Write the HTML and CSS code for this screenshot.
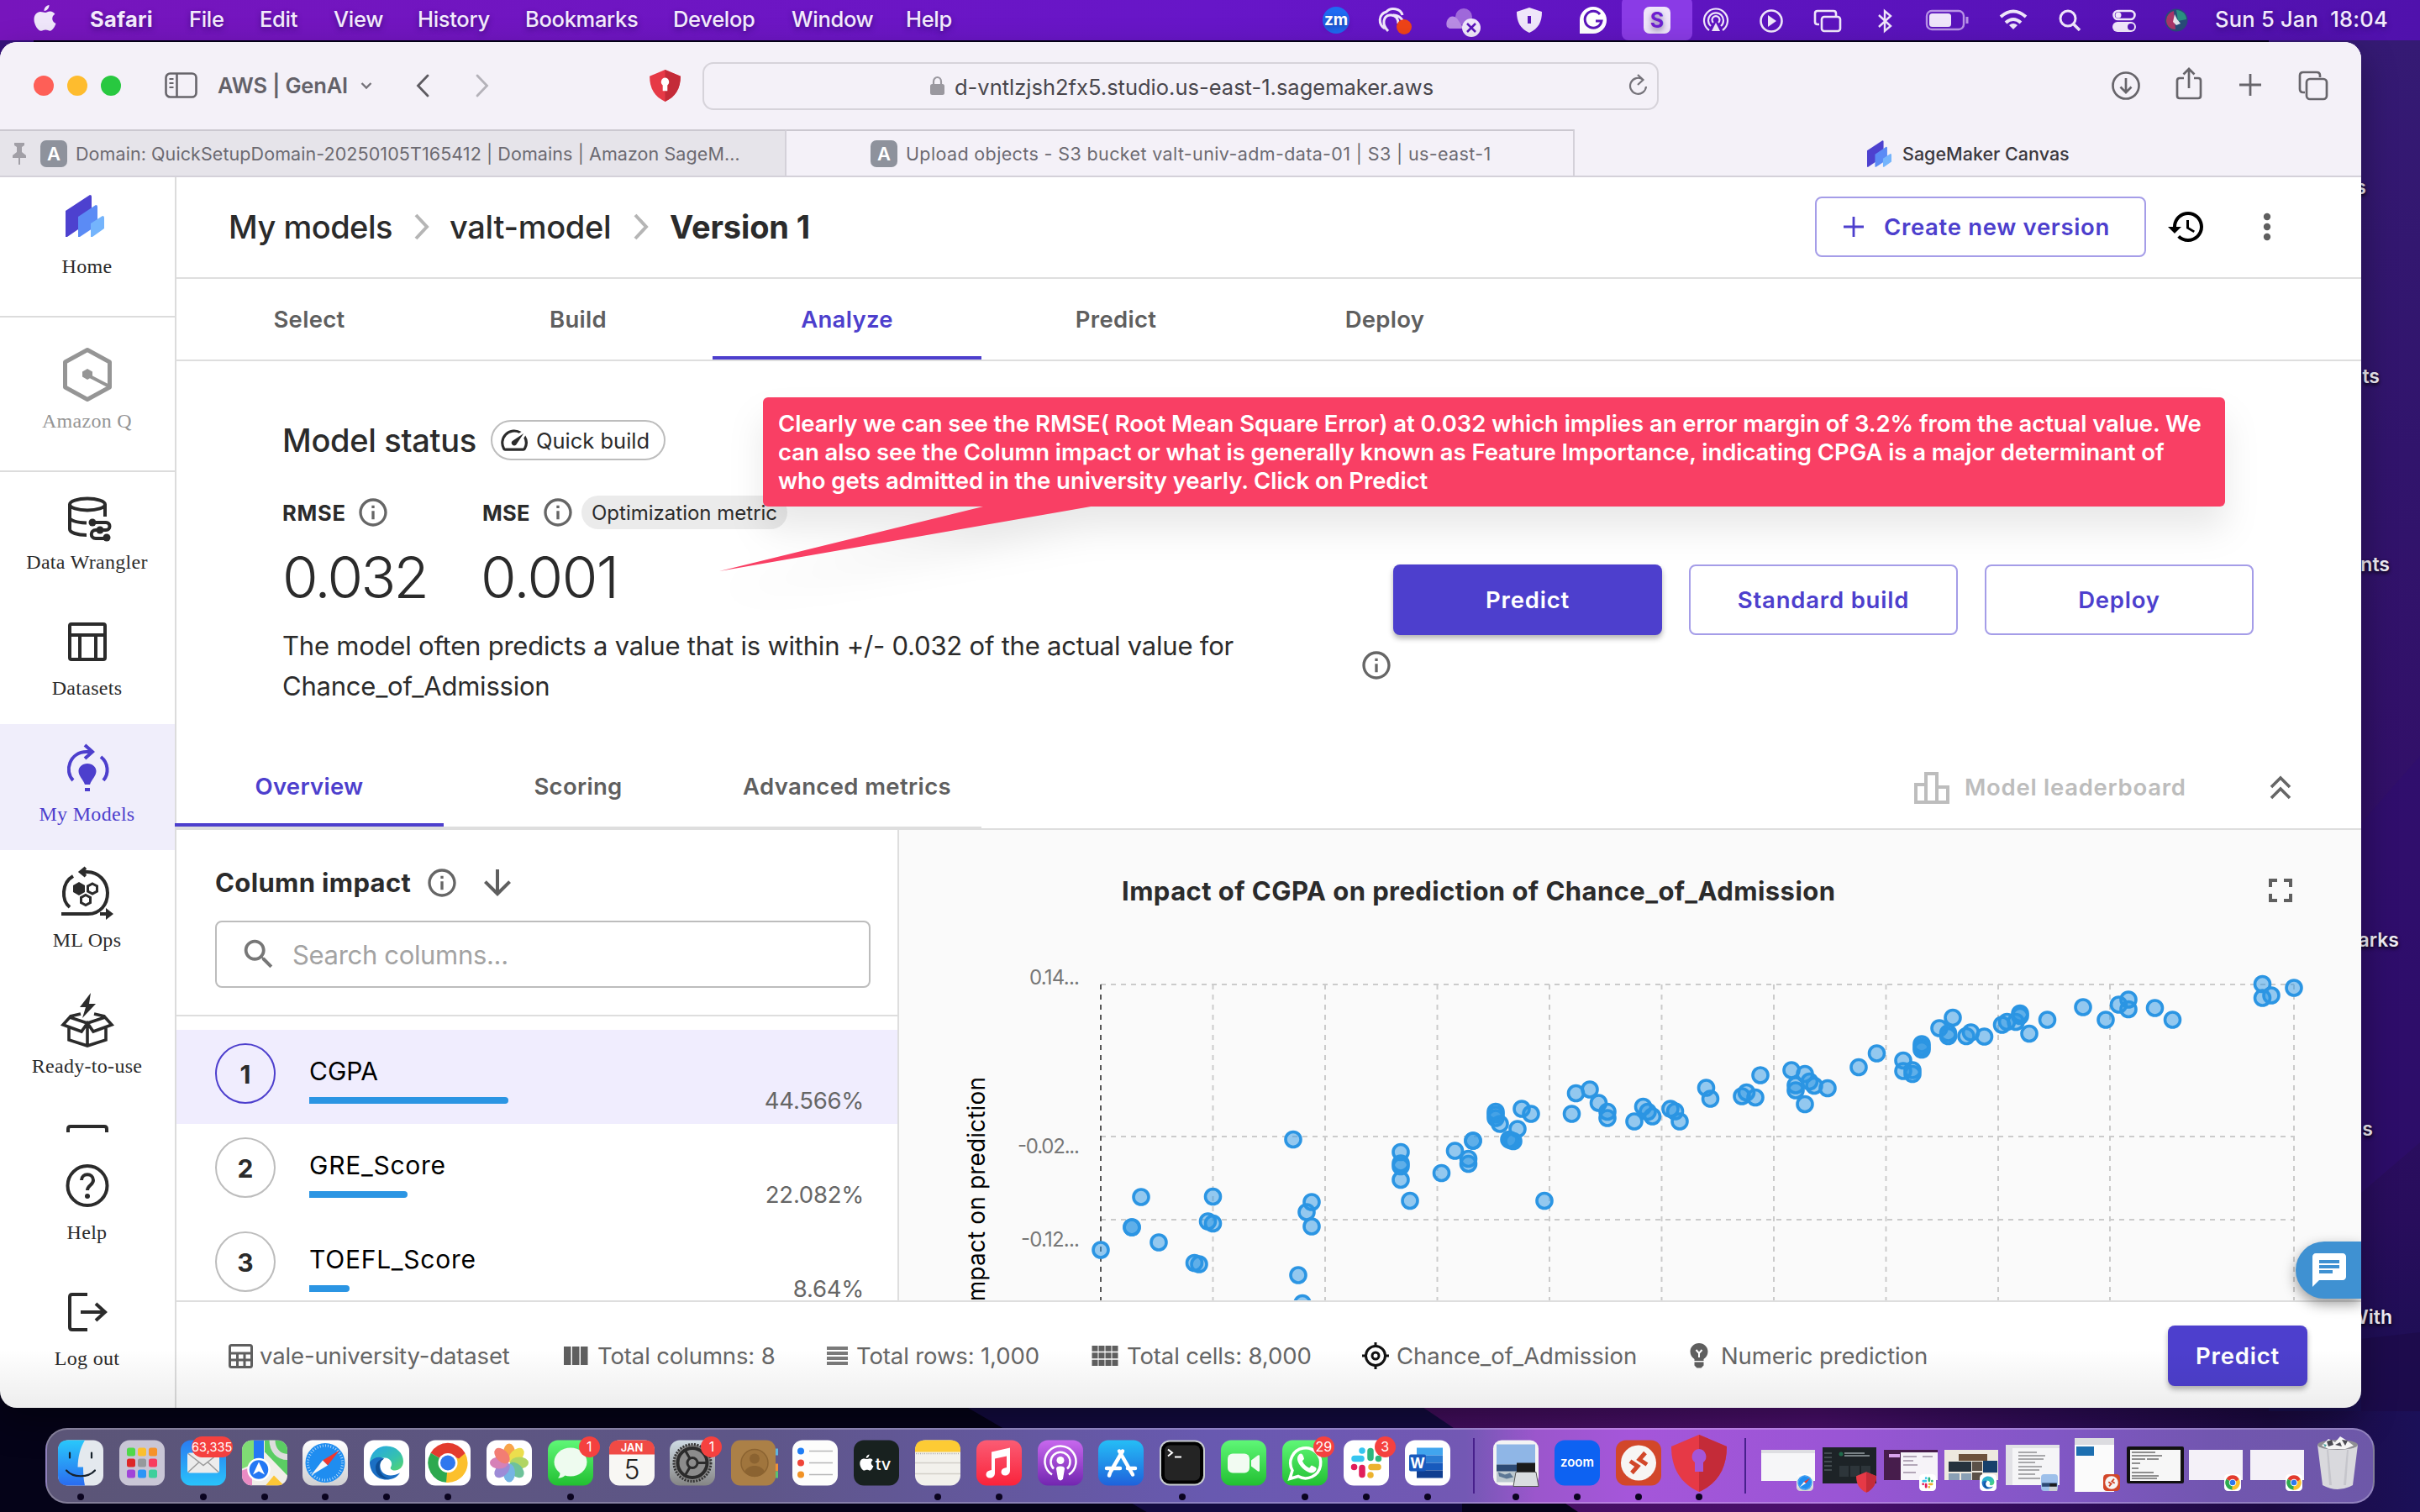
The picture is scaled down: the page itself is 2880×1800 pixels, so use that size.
FILE: index.html
```html
<!DOCTYPE html>
<html lang="en">
<head>
<meta charset="utf-8">
<title>SageMaker Canvas</title>
<link rel="stylesheet" href="styles.css">
</head>
<body>
<svg class="defs" width="0" height="0">
  <defs>
    <linearGradient id="gBlue" x1="0" y1="0" x2="0" y2="1"><stop offset="0" stop-color="#2a7cf0"/><stop offset="1" stop-color="#29c3fb"/></linearGradient>
    <linearGradient id="gFinder" x1="0" y1="0" x2="0" y2="1"><stop offset="0" stop-color="#29c8fb"/><stop offset="1" stop-color="#2a6cf0"/></linearGradient>
    <linearGradient id="gGreen" x1="0" y1="0" x2="0" y2="1"><stop offset="0" stop-color="#5ff777"/><stop offset="1" stop-color="#22c032"/></linearGradient>
    <linearGradient id="gRed" x1="0" y1="0" x2="0" y2="1"><stop offset="0" stop-color="#fb5c74"/><stop offset="1" stop-color="#fa233b"/></linearGradient>
    <linearGradient id="gPod" x1="0" y1="0" x2="0" y2="1"><stop offset="0" stop-color="#c868ee"/><stop offset="1" stop-color="#7226b0"/></linearGradient>
    <linearGradient id="gStore" x1="0" y1="0" x2="0" y2="1"><stop offset="0" stop-color="#25bef6"/><stop offset="1" stop-color="#1f62dc"/></linearGradient>
    <linearGradient id="gGrey" x1="0" y1="0" x2="0" y2="1"><stop offset="0" stop-color="#ffffff"/><stop offset="1" stop-color="#d0d0d2"/></linearGradient>
    <linearGradient id="gSet" x1="0" y1="0" x2="0" y2="1"><stop offset="0" stop-color="#cfdbe4"/><stop offset="1" stop-color="#858585"/></linearGradient>
    <linearGradient id="gEdge" x1="0" y1="0" x2="1" y2="1"><stop offset="0" stop-color="#25a5e8"/><stop offset=".6" stop-color="#35c1b0"/><stop offset="1" stop-color="#58d66a"/></linearGradient>
    <symbol id="info" viewBox="0 0 24 24"><path fill="currentColor" d="M11 7h2v2h-2zm0 4h2v6h-2zm1-9C6.48 2 2 6.48 2 12s4.48 10 10 10 10-4.48 10-10S17.52 2 12 2zm0 18c-4.41 0-8-3.59-8-8s3.59-8 8-8 8 3.59 8 8-3.59 8-8 8z"/></symbol>
    <symbol id="canvas" viewBox="0 0 46 50"><path fill="#4d41cf" d="M0 19 29 0q2 0 2 2v28L2 50H0z"/><path fill="#5b8bf5" d="M15 26 36 12q2 0 2 2v22L17 50h-2z"/><path fill="#74b4fc" d="M30 34 44 25q2 0 2 2v13L32 50h-2z"/></symbol>
    <symbol id="safari" viewBox="0 0 54 54"><rect width="54" height="54" rx="12" fill="url(#gGrey)"/><circle cx="27" cy="27" r="23.500" fill="#1f8df0"/><circle cx="27" cy="27" r="20.500" fill="none" stroke="#cfe6fb" stroke-width="3" stroke-dasharray=".8 2.400"/><path d="m44 12-20 12 6 6z" fill="#f0372f"/><path d="M10 42l14-18 6 6z" fill="#f6f6f6"/></symbol>
    <symbol id="edge" viewBox="0 0 54 54"><rect width="54" height="54" rx="12" fill="#fff"/><path fill="url(#gEdge)" d="M7 26C8 14 17 7 27 7c12 0 20 9 20 18 0 7-5 11-10 11-4 0-6-2-5-4 3-4 0-11-7-11-8 0-13 4-18 5z"/><path fill="#1b6fc4" d="M7 26c5-6 12-7 17-4-6 3-6 12-1 17 5 4 12 4 20 0-4 6-10 8-16 8C15 47 7 38 7 26z"/><path fill="#0e4f96" d="M24 22c-8 4-8 20 6 24-9 1-16-5-16-13 0-6 4-10 10-11z"/></symbol>
    <symbol id="chrome" viewBox="0 0 54 54"><rect width="54" height="54" rx="12" fill="#fff"/><path fill="#e33b2e" d="M27 27 6.500 15.200A23.500 23.500 0 0 1 47.400 15.200z"/><path fill="#2da94f" d="M27 27 27 50.500A23.500 23.500 0 0 1 6.600 15.200z"/><path fill="#fcc02c" d="M27 27 47.400 15.200A23.500 23.500 0 0 1 25 50.400z"/><path fill="#e33b2e" d="M27 15.500H47.500L40 22z"/><path fill="#2da94f" d="M7 16 17 33l9 4-8 3z"/><path fill="#fcc02c" d="M37 32 26 50l4-14z"/><circle cx="27" cy="27" r="11.500" fill="#fff"/><circle cx="27" cy="27" r="9" fill="#2f78ee"/></symbol>
    <symbol id="slack" viewBox="0 0 54 54"><rect width="54" height="54" rx="12" fill="#fff"/><g stroke-width="7.500" stroke-linecap="round"><path stroke="#36c5f0" d="M13 22h8M22 12.500v.1"/><path stroke="#2eb67d" d="M32 13v8M41.500 22h-.1"/><path stroke="#ecb22e" d="M33 32h8M32 41.500v-.1"/><path stroke="#e01e5a" d="M22 33v8M12.500 32h.1"/></g></symbol>
    <symbol id="shield" viewBox="0 0 66 68"><path fill="#e63946" d="M33 0 66 14c0 26-11 44-33 54C11 58 0 40 0 14z"/><path fill="#c42b38" d="M33 0 66 14c0 26-11 44-33 54z"/></symbol>
    <symbol id="anydesk" viewBox="0 0 54 54"><rect width="54" height="54" rx="12" fill="#d2472a"/><circle cx="27" cy="27" r="21" fill="#f7f5f4"/><path d="m17 25 9 6-7 8M37 29l-9-6 7-8" fill="none" stroke="#d2472a" stroke-width="5"/></symbol>
  </defs>
</svg>

<svg class="wallpaper" viewBox="0 0 2880 1800" aria-hidden="true">
  <defs>
    <linearGradient id="strip" x1="0" y1="0" x2="0" y2="1"><stop offset="0" stop-color="#351a74"/><stop offset=".3" stop-color="#31146c"/><stop offset=".6" stop-color="#320f68"/><stop offset=".86" stop-color="#280d5c"/><stop offset="1" stop-color="#1a0f52"/></linearGradient>
    <linearGradient id="pur" x1="0" y1="0" x2="1" y2="0"><stop offset="0" stop-color="#430e5e"/><stop offset=".4" stop-color="#4a0f6c"/><stop offset=".65" stop-color="#2e0c58"/><stop offset=".85" stop-color="#1c0a42"/><stop offset="1" stop-color="#1b1058"/></linearGradient>
  </defs>
  <rect width="2880" height="1800" fill="#050318"/>
  <path fill="#130b40" d="M1140 1669h600v140h-360z"/>
  <path fill="url(#pur)" d="M1684 1669h1196v131h-1002z"/>
  <path fill="url(#strip)" d="M2700 48h180v1632h-180z"/>
  <path fill="#2e0d70" opacity=".6" d="M2880 900v460l-70 60v-440z"/>
  <path fill="#1c0a48" opacity=".7" d="M2810 1594l70-8v94h-70z"/>
  <path fill="#36127c" d="M0 48h40v60H0z"/>
</svg>

<header class="menubar">
  <nav class="menus">
    <svg width="27" height="32" viewBox="0 0 27 32"><path fill="#efe6fa" d="M18.500 0c.3 3.500-2.600 7-6 7C12.200 3.600 15.300.4 18.500 0zM14 9c1.500 0 3-1.500 5.700-1.500 2.400 0 4.500 1.300 5.700 3.200-4.600 2.700-4 9.300 1.100 11.300-1 3.200-4 8.700-7 8.700-2 0-2.800-1.200-5.200-1.200-2.500 0-3.400 1.200-5.300 1.200C5 30.700.5 23 .5 17.200.5 11.500 4.200 8 8 8c2.500 0 4.500 1 6 1z"/></svg>
    <b>Safari</b><span>File</span><span>Edit</span><span>View</span><span>History</span><span>Bookmarks</span><span>Develop</span><span>Window</span><span>Help</span>
  </nav>
  <svg class="status" width="1086" height="48" viewBox="1550 0 1086 48" fill="none" stroke="#efe6fa" stroke-width="3">
    <circle cx="1590" cy="24" r="16" fill="#1f6bf2" stroke="none"/><text class="zm" x="1590" y="30">zm</text>
    <path d="M1648 34c-8-5-8-17 2-20 5-6 17-4 19 4M1652 37c-8-8-6-18 2-19s10 6 10 10M1658 18c8 0 12 6 12 10"/><circle cx="1671" cy="32" r="9" fill="#ee4318" stroke="none"/>
    <g stroke="none" fill="#b98ce4"><path d="M1722 32c-3-8 5-17 12-10l8 12h-17z"/><circle cx="1742" cy="20" r="10" opacity=".7"/><circle cx="1751" cy="33" r="11" fill="#efe6fa"/></g><path stroke="#5b16bb" stroke-width="2.500" d="m1746 28 10 10m0-10-10 10"/>
    <path fill="#efe6fa" stroke="none" d="m1820 9 15 5c0 12-4 20-15 25-11-5-15-13-15-25z"/><path stroke="#5b16bb" stroke-width="4" d="M1820 19v9"/>
    <path fill="#fff" stroke="none" d="M1880 24a16 16 0 1 1 16 16h-16z"/><path stroke="#5b16bb" d="M1904 17a10 10 0 1 0 2 8h-7"/>
    <rect x="1930" y="-4" width="84" height="52" rx="8" fill="#8a3be6" stroke="none"/><rect x="1956" y="8" width="32" height="32" rx="7" fill="#efe6fa" stroke="none"/><text class="snag" x="1972" y="33">S</text>
    <g stroke-width="2.200"><path d="M2034 36a14 14 0 1 1 16 0M2036 31a9 9 0 1 1 12 0M2039 27a4.500 4.500 0 1 1 6 0"/></g><path fill="#efe6fa" stroke="none" d="M2042 27l5 10h-10z"/>
    <circle cx="2108" cy="25" r="12.500" stroke-width="2.600"/><path fill="#efe6fa" stroke="none" d="m2104 18 10 7-10 7z"/>
    <path stroke-width="2.600" d="M2165 29h-2q-3 0-3-3V16q0-3 3-3h19q3 0 3 3v3"/><rect x="2168" y="20" width="22" height="17" rx="3" stroke-width="2.600"/>
    <path stroke-width="2.400" d="m2236 18 14 13-7 6V13l7 6-14 13"/>
    <rect x="2293" y="13" width="44" height="22" rx="6" stroke="#b892e6" stroke-width="2.400"/><rect x="2296" y="16" width="26" height="16" rx="3.500" fill="#efe6fa" stroke="none"/><path stroke="#b892e6" d="M2341 20v8"/>
    <g stroke-width="4"><path d="M2381 20q15-13 30 0"/><path d="M2387 27q9-8 18 0"/></g><path fill="#efe6fa" stroke="none" d="m2396 35-5-5q5-4 10 0z"/>
    <circle cx="2461" cy="22" r="9"/><path stroke-width="3.500" d="m2468 29 7 7"/>
    <rect x="2515.500" y="13" width="25" height="10" rx="5" stroke-width="2.600"/><circle cx="2521" cy="18" r="3.500" fill="#efe6fa" stroke="none"/><rect x="2514" y="26" width="28" height="12" rx="6" fill="#efe6fa" stroke="none"/><circle cx="2536" cy="32" r="4" fill="#5514b6" stroke="none"/>
    <circle cx="2590" cy="24" r="13.500" fill="#294b78" stroke="none"/><path fill="#a93568" stroke="none" d="M2578 24a12 12 0 0 1 9-11l2 22c-7 0-11-5-11-11z"/><path fill="#2a8f80" stroke="none" d="M2590 12c7 0 12 5 12 11l-10 2z"/><path fill="#fff" stroke="none" opacity=".85" d="m2588 17 3 6 4 5-5 2-4-4z"/>
  </svg>
  <span class="clock">Sun 5 Jan&nbsp; 18:04</span>
</header>

<div class="desk-label" style="top:209px;right:64px">s</div>
<div class="desk-label" style="top:434px;right:48px">ts</div>
<div class="desk-label" style="top:658px;right:36px">nts</div>
<div class="desk-label" style="top:1105px;right:25px">arks</div>
<div class="desk-label" style="top:1330px;right:56px">s</div>
<div class="desk-label" style="top:1554px;right:33px">With</div>

<section class="window">
  <div class="toolbar">
    <div class="lights"><i class="red"></i><i class="amber"></i><i class="green"></i></div>
    <svg class="ic-side" width="40" height="32" viewBox="0 0 40 32" fill="none" stroke="#67656b" stroke-width="2.600"><rect x="1.500" y="1.500" width="36" height="28" rx="5"/><path d="M14.500 2v28"/><path stroke-width="2" d="M5.500 8h5M5.500 13h5M5.500 18h5"/></svg>
    <span class="group">AWS | GenAI</span>
    <svg class="ic-chev" width="14" height="10" viewBox="0 0 14 10" fill="none" stroke="#75737a" stroke-width="2.400"><path d="m1.500 2 5.500 5.500L12.500 2"/></svg>
    <svg class="ic-back" width="16" height="28" viewBox="0 0 16 28" fill="none" stroke="#5d5b61" stroke-width="2.800" stroke-linecap="round"><path d="M14 2 2.500 14 14 26"/></svg>
    <svg class="ic-fwd" width="16" height="28" viewBox="0 0 16 28" fill="none" stroke="#b4b2b9" stroke-width="2.800" stroke-linecap="round"><path d="M2 2l11.500 12L2 26"/></svg>
    <svg class="ic-shield" width="37" height="38" viewBox="0 0 66 68"><use href="#shield"/><path fill="#fff" d="M33 17a9 9 0 0 1 5 16v12H28V33a9 9 0 0 1 5-16z"/></svg>
    <div class="url">
      <svg width="17" height="24" viewBox="0 0 17 24"><rect y="10" width="17" height="13" rx="2.500" fill="#9a989f"/><path d="M4 11V7a4.500 5 0 0 1 9 0v4" fill="none" stroke="#9a989f" stroke-width="2.200"/></svg>
      <span>d-vntlzjsh2fx5.studio.us-east-1.sagemaker.aws</span>
      <svg class="reload" width="24" height="28" viewBox="0 0 24 28" fill="none" stroke="#75737a" stroke-width="2.200"><path d="M17 6.500A9.500 9.500 0 1 0 21 15M11 1l6.500 6-6.500 6"/></svg>
    </div>
    <svg class="ic-dl" width="36" height="36" viewBox="0 0 36 36" fill="none" stroke="#67656b" stroke-width="2.700"><circle cx="18" cy="18" r="15.500"/><path d="M18 9v17M11.500 19.500 18 26l6.500-6.500"/></svg>
    <svg class="ic-share" width="32" height="40" viewBox="0 0 32 40" fill="none" stroke="#67656b" stroke-width="2.700"><path d="M10 13H5q-3 0-3 3v18q0 3 3 3h22q3 0 3-3V16q0-3-3-3h-5M16 25V2M9.500 8.500 16 2l6.500 6.500"/></svg>
    <svg class="ic-plus" width="28" height="28" viewBox="0 0 28 28" stroke="#67656b" stroke-width="2.800"><path d="M14 1v26M1 14h26"/></svg>
    <svg class="ic-tabs" width="36" height="36" viewBox="0 0 36 36" fill="none" stroke="#67656b" stroke-width="2.700"><path d="M8 26H6q-4 0-4-4V6q0-4 4-4h16q4 0 4 4v2"/><rect x="10" y="10" width="24" height="24" rx="4"/></svg>
  </div>
  <div class="tabbar">
    <div class="btab first">
      <svg class="pin" width="18" height="26" viewBox="0 0 18 26" fill="#a19fa6"><path d="M3 0h12v3l-3 2v6l5 4v3H1v-3l5-4V5L3 3zM8 18h2v8H8z"/></svg>
      <i class="fav">A</i><span>Domain: QuickSetupDomain-20250105T165412 | Domains | Amazon SageM…</span>
    </div>
    <div class="btab second"><i class="fav">A</i><span>Upload objects - S3 bucket valt-univ-adm-data-01 | S3 | us-east-1</span></div>
    <div class="btab active"><svg width="29" height="32"><use href="#canvas"/></svg><span>SageMaker Canvas</span></div>
  </div>

  <div class="app">
    <aside class="sidebar">
      <div class="nav home"><svg width="46" height="50"><use href="#canvas"/></svg><span>Home</span></div>
      <div class="nav amazonq"><svg width="64" height="64" viewBox="0 0 64 64" fill="none" stroke="#959595" stroke-width="5"><path stroke-linejoin="round" d="M32 2.500 58.500 17v30L32 61.500 5.500 47V17z"/><path stroke-width="4" d="m33 33 25 13"/><path fill="#959595" stroke="none" d="m32 25 6 3.500v6L32 38l-6-3.500v-6z"/></svg><span>Amazon Q</span></div>
      <div class="navscroll">
        <div class="nav"><svg viewBox="0 0 64 64"><ellipse cx="32" cy="14.500" rx="21" ry="7"/><path d="M11 14v30c0 4 9 7 20 7M53 14v15M11 30c0 4 9 6 20 6.500"/><path d="M39 36h15c6 0 6 9 0 9H42c-7 0-7 10 0 10h12"/><g class="f"><circle cx="38" cy="36" r="4.500"/><circle cx="47" cy="45" r="4.500"/><circle cx="55" cy="54" r="4.500"/></g></svg><span>Data Wrangler</span></div>
        <div class="nav"><svg viewBox="0 0 64 64"><rect x="11" y="7" width="42" height="42" rx="2"/><path d="M11 20h42M23 20v28M42 20v28"/></svg><span>Datasets</span></div>
        <div class="nav current"><svg viewBox="0 0 64 64"><path d="M15 43C4 32 11 9 31 9h6M29 1l9 8-9 8M48 15c9 7 10 20 3 28"/><path class="f" d="M32 23c6 0 10.500 4 10.500 9 0 6-5 9-7.500 16h-6c-2.500-7-7.500-10-7.500-16 0-5 4.500-9 10.500-9zM29 52h6v4h-6z"/></svg><span>My Models</span></div>
        <div class="nav"><svg viewBox="0 0 64 64"><path d="M1 52h32c14 0 23-11 23-25S45 2 32 2h-6M30-3l-6 5 6 5M15 7C1 15 1 36 11 44M47 52h10"/><path class="f" d="m54 45 9 7-9 7zM22 14l7 4v8l-7 4-7-4v-8z"/><path stroke-width="3" d="m38 16 5.500 3v6L38 28l-5.500-3v-6zM30 29.500l5.500 3v6l-5.500 3-5.500-3v-6z"/></svg><span>ML Ops</span></div>
        <div class="nav"><svg viewBox="0 0 64 64"><path stroke-width="3.600" d="M10 36v16l22 7 22-7V36M32 32v27M32 32l-7 10-22-8 8-9 21 7 21-7 8 9-22 8zM11 24l13-3M53 24l-13-3"/><path class="f" d="M36-4 23 13h7l-4 13 16-17h-8z"/></svg><span>Ready-to-use</span></div>
        <div class="nav"><svg viewBox="0 0 64 64"><path d="M9 40V8q0-3 3-3h40q3 0 3 3v32"/></svg></div>
      </div>
      <div class="nav help"><svg viewBox="0 0 64 64"><circle cx="32" cy="27.500" r="23.500"/><path d="M25 21c0-9 14-9 14 0 0 6-7 6-7 12"/><circle class="f" cx="32" cy="40" r="3"/></svg><span>Help</span></div>
      <div class="nav"><svg viewBox="0 0 64 64"><path d="M32 7H14q-3 0-3 3v36q0 3 3 3h18M24 28h29M42 18l11 10-11 10"/></svg><span>Log out</span></div>
    </aside>

    <main class="main">
      <div class="crumbs">
        <span class="c1">My models</span><svg width="20" height="32" viewBox="0 0 20 32"><path d="m3 2 13 14L3 30" fill="none" stroke="#b5b5b5" stroke-width="4"/></svg><span class="c2">valt-model</span><svg width="20" height="32" viewBox="0 0 20 32"><path d="m3 2 13 14L3 30" fill="none" stroke="#b5b5b5" stroke-width="4"/></svg><b>Version 1</b>
        <button class="btn create"><svg width="26" height="26" viewBox="0 0 26 26" stroke="#4d3fcd" stroke-width="2.800"><path d="M13 1v24M1 13h24"/></svg>Create new version</button>
        <svg class="hist" width="48" height="48" viewBox="0 0 24 24"><path d="M13 3c-4.970 0-9 4.030-9 9H1l3.890 3.890.07.14L9 12H6c0-3.870 3.130-7 7-7s7 3.130 7 7-3.130 7-7 7c-1.930 0-3.680-.79-4.940-2.060l-1.420 1.420C8.270 19.990 10.510 21 13 21c4.970 0 9-4.030 9-9s-4.030-9-9-9zm-1 5v5l4.280 2.540.72-1.210-3.500-2.080V8H12z"/></svg>
        <svg class="dots" width="10" height="34" viewBox="0 0 10 34" fill="#5f5f5f"><circle cx="5" cy="5" r="4.200"/><circle cx="5" cy="17" r="4.200"/><circle cx="5" cy="29" r="4.200"/></svg>
      </div>
      <div class="steps"><span>Select</span><span>Build</span><span class="on">Analyze</span><span>Predict</span><span>Deploy</span></div>

      <div class="statuspane">
        <div class="left">
          <div class="title"><h1>Model status</h1><div class="chip"><svg width="38" height="38" viewBox="0 0 24 24"><path fill="#2b2b2b" d="M20.380 8.570l-1.230 1.850a8 8 0 0 1-.22 7.580H5.070A8 8 0 0 1 15.580 6.850l1.850-1.230A10 10 0 0 0 3.350 19a2 2 0 0 0 1.720 1h13.850a2 2 0 0 0 1.740-1 10 10 0 0 0-.27-10.440zm-9.790 6.840a2 2 0 0 0 2.830 0l5.660-8.490-8.490 5.660a2 2 0 0 0 0 2.830z"/></svg>Quick build</div></div>
          <div class="metrics">
            <div class="mh"><b>RMSE</b><svg class="info"><use href="#info"/></svg></div>
            <div class="mh m2"><b>MSE</b><svg class="info"><use href="#info"/></svg><span class="opt">Optimization metric</span></div>
            <div class="big">0.032</div><div class="big b2">0.001</div>
          </div>
          <div class="desc"><p>The model often predicts a value that is within +/- 0.032 of the actual value for Chance_of_Admission</p><svg class="info"><use href="#info"/></svg></div>
        </div>
        <div class="actions"><button class="btn solid">Predict</button><button class="btn">Standard build</button><button class="btn">Deploy</button></div>
      </div>

      <div class="subtabs">
        <div class="steps sub"><span class="on">Overview</span><span>Scoring</span><span class="adv">Advanced metrics</span></div>
        <svg class="lb" width="42" height="38" viewBox="0 0 42 38" fill="none" stroke="#bdbdbd" stroke-width="4"><path d="M2 36V15h12V2h13v16h13v18zM14 15v21M27 18v18"/></svg>
        <span class="lbt">Model leaderboard</span>
        <svg class="up" width="26" height="30" viewBox="0 0 26 30" fill="none" stroke="#666" stroke-width="3.600"><path d="M2 14 13 3l11 11M2 27l11-11 11 11"/></svg>
      </div>

      <div class="split">
        <div class="impact">
          <div class="ih"><b>Column impact</b><svg class="info"><use href="#info"/></svg><svg class="arr" width="48" height="48" viewBox="0 0 24 24"><path fill="#5f5f5f" d="M20 12l-1.410-1.410L13 16.170V4h-2v12.170l-5.580-5.590L4 12l8 8 8-8z"/></svg></div>
          <div class="search"><svg width="46" height="46" viewBox="0 0 24 24"><path fill="#777" d="M15.500 14h-.79l-.28-.27C15.410 12.590 16 11.110 16 9.500 16 5.910 13.090 3 9.500 3S3 5.910 3 9.500 5.910 16 9.500 16c1.610 0 3.090-.59 4.230-1.570l.27.28v.79l5 4.990L20.490 19l-4.990-5zm-6 0C7.010 14 5 11.990 5 9.500S7.010 5 9.500 5 14 7.010 14 9.500 11.990 14 9.500 14z"/></svg><span>Search columns...</span></div>
          <div class="list">
            <div class="row sel"><i>1</i><div class="nm"><span>CGPA</span><div class="bar" style="width:44.566%"></div></div><em>44.566%</em></div>
            <div class="row"><i>2</i><div class="nm"><span class="gre">GRE_Score</span><div class="bar" style="width:22.082%"></div></div><em>22.082%</em></div>
            <div class="row"><i>3</i><div class="nm"><span class="gre">TOEFL_Score</span><div class="bar" style="width:9%"></div></div><em>8.64%</em></div>
          </div>
        </div>
        <svg class="chart" width="1740" height="560" viewBox="1070 988 1740 560">
          <text class="ct" x="1335" y="1072" textLength="849">Impact of CGPA on prediction of Chance_of_Admission</text>
          <path fill="#5f5f5f" transform="translate(2690 1036) scale(2)" d="M7 14H5v5h5v-2H7v-3zm-2-4h2V7h3V5H5v5zm12 7h-3v2h5v-5h-2v3zM14 5v2h3v3h2V5h-5z"/>
          <text class="yl" transform="translate(1172 1557) rotate(-90)" textLength="275">Impact on prediction</text>
          <g class="tick"><text x="1285" y="1172" textLength="60">0.14...</text><text x="1285" y="1373" textLength="74">-0.02...</text><text x="1285" y="1484" textLength="70">-0.12...</text></g>
          <path class="grid" d="M1310 1172H2730M1310 1353H2730M1310 1452H2730M1443.500 1172V1548M1577 1172V1548M1710.500 1172V1548M1844 1172V1548M1977.500 1172V1548M2111 1172V1548M2244.500 1172V1548M2378 1172V1548M2511 1172V1548M2730 1172V1548"/>
          <path class="grid axis" d="M1310 1172V1548"/>
          <g class="pts" id="pts"></g>
        </svg>
      </div>

      <footer class="foot">
        <div><svg width="29" height="29" viewBox="0 0 29 29" fill="none" stroke="#5f5f5f" stroke-width="3"><rect x="1.500" y="1.500" width="26" height="26" rx="2"/><path d="M2 11h25M2 19h25M10.500 11v16M19 11v16"/></svg><span>vale-university-dataset</span></div>
        <div><svg width="32" height="24" viewBox="0 0 32 24" fill="#5f5f5f"><path d="M0 1h8.500v22H0zM10 1h8.500v22H10zM20 1h8.500v22H20z"/></svg><span>Total columns: 8</span></div>
        <div><svg width="27" height="24" viewBox="0 0 27 24" fill="#7a7a7a"><path d="M0 1h25v4H0zM0 7h25v4H0zM0 13h25v4H0zM0 19h25v4H0z"/></svg><span>Total rows: 1,000</span></div>
        <div><svg width="34" height="24" viewBox="0 0 34 24"><path d="M4 0v24M12 0v24M20 0v24M28 0v24" stroke="#5f5f5f" stroke-width="7"/><path d="M0 7.500h34M0 16h34" stroke="#fff" stroke-width="1.500"/></svg><span>Total cells: 8,000</span></div>
        <div><svg width="34" height="34" viewBox="0 0 34 34" fill="none" stroke="#111" stroke-width="3"><circle cx="17" cy="17" r="11.500"/><circle cx="17" cy="17" r="4"/><path d="M17 1v5M17 28v5M1 17h5M28 17h5"/></svg><span class="tgt">Chance_of_Admission</span></div>
        <div><svg width="24" height="30" viewBox="0 0 24 30"><path fill="#5f5f5f" d="M11 0c6 0 10.500 4.500 10.500 10 0 4-2 7-5 9v2h-11v-2C2.500 17 .5 14 .5 10 .5 4.500 5 0 11 0zM5.500 22.500h11v4l-3 3h-5l-3-3z"/><path d="m7.500 8 3.500 4 3.500-4M11 12v5" fill="none" stroke="#fff" stroke-width="2"/></svg><span>Numeric prediction</span></div>
        <button class="btn solid">Predict</button>
      </footer>
    </main>
    <div class="chat"><svg width="48" height="48" viewBox="0 0 24 24"><path fill="#fff" d="M20 2H4c-1.100 0-1.990.9-1.990 2L2 22l4-4h14c1.100 0 2-.9 2-2V4c0-1.100-.9-2-2-2zM6 9h12v2H6V9zm8 5H6v-2h8v2zm4-6H6V6h12v2z"/></svg></div>
  </div>
</section>

<div class="callout">
  <svg width="450" height="80" viewBox="856 600 450 80"><path fill="#f93f64" d="M1174 602h130L856 680z"/></svg>
  <p>Clearly we can see the RMSE( Root Mean Square Error) at 0.032 which implies an error margin of 3.2% from the actual value. We<br>can also see the Column impact or what is generally known as Feature Importance, indicating CPGA is a major determinant of<br>who gets admitted in the university yearly. Click on Predict</p>
</div>

<div class="dock">
  <div class="app-ic run"><svg viewBox="0 0 54 54"><rect width="54" height="54" rx="12" fill="#e4e9ee"/><path fill="url(#gFinder)" d="M12 0h20c-6 10-8 20-8.500 32H30c0 8 .5 15 2 22H12Q0 54 0 42V12Q0 0 12 0z"/><path d="M14 15v6M40 15v6M10 36c8 9 26 9 34 0" fill="none" stroke="#17222c" stroke-width="2.200" stroke-linecap="round"/></svg></div>
  <div class="app-ic"><svg viewBox="0 0 54 54"><rect width="54" height="54" rx="12" fill="#c9c6d6"/><rect x="9" y="9" width="10" height="10" rx="2.500" fill="#4fd84a"/><rect x="22" y="9" width="10" height="10" rx="2.500" fill="#fbbf2d"/><rect x="35" y="9" width="10" height="10" rx="2.500" fill="#f6922a"/><rect x="9" y="22" width="10" height="10" rx="2.500" fill="#dd2727"/><rect x="22" y="22" width="10" height="10" rx="2.500" fill="#96999c"/><rect x="35" y="22" width="10" height="10" rx="2.500" fill="#f83b5e"/><rect x="9" y="35" width="10" height="10" rx="2.500" fill="#a044d8"/><rect x="22" y="35" width="10" height="10" rx="2.500" fill="#2b95f6"/><rect x="35" y="35" width="10" height="10" rx="2.500" fill="#3ecf9c"/></svg></div>
  <div class="app-ic run"><svg viewBox="0 0 54 54"><rect width="54" height="54" rx="12" fill="url(#gBlue)"/><rect x="8" y="15" width="38" height="24" rx="3" fill="#ececec"/><path d="m9 16 18 14 18-14M9 38l13-12M45 38 32 26" fill="none" stroke="#9b9b9b" stroke-width="1.500"/></svg><span class="badge wide">63,335</span></div>
  <div class="app-ic run"><svg viewBox="0 0 54 54"><clipPath id="cm"><rect width="54" height="54" rx="12"/></clipPath><g clip-path="url(#cm)"><path fill="#f2efe9" d="M0 0h54v54H0z"/><path fill="#7fdc74" d="M0 0h14v28L0 34z"/><path fill="#5bcd63" d="M27 0h27v42L27 14z"/><path fill="#e98bc4" d="M0 36l12-4v22H0z"/><path fill="#fcc637" d="M28 54l10-12 12 12z"/><path fill="#2478f4" d="M14 0h12v34H14z"/><path d="M36 0c0 12 8 20 18 20" fill="none" stroke="#ddd" stroke-width="7"/></g><circle cx="20" cy="35" r="12.500" fill="#2478f4" stroke="#fff" stroke-width="2.500"/><path fill="#fff" d="m20 26 7 15-7-4-7 4z"/></svg></div>
  <div class="app-ic run"><svg><use href="#safari"/></svg></div>
  <div class="app-ic run"><svg><use href="#edge"/></svg></div>
  <div class="app-ic run"><svg><use href="#chrome"/></svg></div>
  <div class="app-ic"><svg viewBox="0 0 54 54"><rect width="54" height="54" rx="12" fill="#fff"/><g opacity=".85"><ellipse cx="27" cy="15" rx="7" ry="11" fill="#f7952b"/><ellipse cx="27" cy="15" rx="7" ry="11" fill="#e9d92f" transform="rotate(45 27 27)"/><ellipse cx="27" cy="15" rx="7" ry="11" fill="#a4ce4a" transform="rotate(90 27 27)"/><ellipse cx="27" cy="15" rx="7" ry="11" fill="#55b889" transform="rotate(135 27 27)"/><ellipse cx="27" cy="15" rx="7" ry="11" fill="#5da7e0" transform="rotate(180 27 27)"/><ellipse cx="27" cy="15" rx="7" ry="11" fill="#8d77cf" transform="rotate(225 27 27)"/><ellipse cx="27" cy="15" rx="7" ry="11" fill="#cf6cab" transform="rotate(270 27 27)"/><ellipse cx="27" cy="15" rx="7" ry="11" fill="#f0675b" transform="rotate(315 27 27)"/></g></svg></div>
  <div class="app-ic run"><svg viewBox="0 0 54 54"><rect width="54" height="54" rx="12" fill="url(#gGreen)"/><ellipse cx="27" cy="26" rx="19.500" ry="17" fill="#eefbef"/><path fill="#eefbef" d="M14 37c1 4 0 6-2 8 5 0 8-2 10-5z"/></svg><span class="badge">1</span></div>
  <div class="app-ic"><svg viewBox="0 0 54 54"><rect width="54" height="54" rx="12" fill="#f8f7f4"/><path fill="#f04a45" d="M12 0h30q12 0 12 12v5H0v-5Q0 0 12 0z"/><text class="jan" x="27" y="13">JAN</text><text class="five" x="27" y="46">5</text></svg></div>
  <div class="app-ic"><svg viewBox="0 0 54 54"><rect width="54" height="54" rx="12" fill="url(#gSet)"/><circle cx="27" cy="27" r="22" fill="#8c8c8c" stroke="#333" stroke-width="3" stroke-dasharray="2 1.500"/><circle cx="27" cy="27" r="17.500" fill="none" stroke="#2b2b2b" stroke-width="4"/><path d="M27 27h18M27 27l-9 15.500M27 27l-9-15.500" stroke="#2b2b2b" stroke-width="3"/><circle cx="27" cy="27" r="6" fill="#8c8c8c" stroke="#2b2b2b" stroke-width="3"/></svg><span class="badge">1</span></div>
  <div class="app-ic"><svg viewBox="0 0 54 54"><path fill="#5fb4e0" d="M50 10h6v8h-6z"/><path fill="#ef9037" d="M50 28h6v9h-6z"/><path fill="#5bc272" d="M50 37h6v8h-6z"/><rect width="53" height="54" rx="11" fill="#ab8047"/><circle cx="28" cy="27" r="16" fill="#a0753d" stroke="#8b6331" stroke-width="1.500"/><circle cx="28" cy="22" r="6" fill="#8b6331"/><path fill="#8b6331" d="M16 38c3-10 21-10 24 0-7 7-17 7-24 0z"/></svg></div>
  <div class="app-ic"><svg viewBox="0 0 54 54"><rect width="54" height="54" rx="12" fill="#fdfdfc"/><path d="M20 13h28M20 27h28M20 41h28" stroke="#b7b7b7" stroke-width="1.500"/><circle cx="10" cy="13" r="4" fill="#1f7df5"/><circle cx="10" cy="27" r="4" fill="#ef4438"/><circle cx="10" cy="41" r="4" fill="#f19224"/></svg></div>
  <div class="app-ic"><svg viewBox="0 0 54 54"><rect width="54" height="54" rx="12" fill="#18211f"/><path fill="#fff" transform="translate(7 17) scale(.62)" d="M18.500 0c.3 3.500-2.600 7-6 7C12.200 3.600 15.300.4 18.500 0zM14 9c1.500 0 3-1.500 5.700-1.500 2.400 0 4.500 1.300 5.700 3.200-4.600 2.700-4 9.300 1.100 11.300-1 3.200-4 8.700-7 8.700-2 0-2.800-1.200-5.200-1.200-2.500 0-3.400 1.200-5.300 1.200C5 30.700.5 23 .5 17.200.5 11.500 4.200 8 8 8c2.500 0 4.500 1 6 1z"/><text class="tv" x="35" y="35">tv</text></svg></div>
  <div class="app-ic run"><svg viewBox="0 0 54 54"><rect width="54" height="54" rx="12" fill="#f2f1ec"/><path fill="#fdcb34" d="M12 0h30q12 0 12 12v2H0v-2Q0 0 12 0z"/><path d="M1 16h52" stroke="#aaa" stroke-width="1.500" stroke-dasharray="1 1.500"/><path d="M0 27h54M0 40h54" stroke="#d2d0c8" stroke-width="1.500"/></svg></div>
  <div class="app-ic run"><svg viewBox="0 0 54 54"><rect width="54" height="54" rx="12" fill="url(#gRed)"/><path fill="#fff" d="M18 14 40 9v27c0 4-3 6-6 6-6 0-6-8 0-9l2-.5V19l-14 3v17c0 4-3 6-6 6-6 0-6-8 0-9l2-.5z"/></svg></div>
  <div class="app-ic"><svg viewBox="0 0 54 54"><rect width="54" height="54" rx="12" fill="url(#gPod)"/><g fill="none" stroke="#fff" stroke-width="2.500"><path d="M17 41a18.500 18.500 0 1 1 20 0"/><path d="M19 34a11.500 11.500 0 1 1 16 0"/></g><circle cx="27" cy="24" r="4.500" fill="#fff"/><path fill="#fff" d="M22 34q0-3 5-3t5 3l-2 12q-3 4-6 0z"/></svg></div>
  <div class="app-ic"><svg viewBox="0 0 54 54"><rect width="54" height="54" rx="12" fill="url(#gStore)"/><path d="m29 13-14 24M25 13l16 28M10 33.500h16M35 33.500h9M14 39l-1 3" stroke="#fff" stroke-width="4.500" stroke-linecap="round"/></svg></div>
  <div class="app-ic run"><svg viewBox="0 0 54 54"><rect width="54" height="54" rx="12" fill="#c8cdd0"/><rect x="2" y="2" width="50" height="50" rx="10" fill="#000"/><rect x="6" y="6" width="42" height="42" rx="6" fill="#242424"/><path d="m10 11 5 4-5 4M18 20h8" fill="none" stroke="#fff" stroke-width="2"/></svg></div>
  <div class="app-ic"><svg viewBox="0 0 54 54"><rect width="54" height="54" rx="12" fill="url(#gGreen)"/><rect x="8" y="16" width="26" height="23" rx="6" fill="#f2fbf2"/><path fill="#f2fbf2" d="m36 24 8-6q2-1 2 1v17q0 2-2 1l-8-6z"/></svg></div>
  <div class="app-ic run"><svg viewBox="0 0 54 54"><rect width="54" height="54" rx="12" fill="url(#gGreen)"/><path d="M9 46l3-10a18 18 0 1 1 7 7z" fill="none" stroke="#fff" stroke-width="3.500"/><path fill="#fff" d="M20 17c2-2 4-1 5 2l1 3c0 1-2 2-2 3 2 4 4 6 8 8 1 0 2-3 3-3l4 2c2 1 2 2 1 4-3 5-9 3-14-1-6-5-11-13-6-18z"/></svg><span class="badge">29</span></div>
  <div class="app-ic run"><svg><use href="#slack"/></svg><span class="badge">3</span></div>
  <div class="app-ic run"><svg viewBox="0 0 54 54"><rect width="54" height="54" rx="12" fill="#fff"/><path fill="#41a5ee" d="M14 9h31v9H14z"/><path fill="#2b7cd3" d="M14 18h31v9H14z"/><path fill="#185abd" d="M14 27h31v9H14z"/><path fill="#103f91" d="M14 36h31v9H14z"/><rect x="5" y="17" width="20" height="20" rx="2" fill="#185abd"/><text class="w" x="15" y="33">W</text></svg></div>
  <div class="sep s1"></div>
  <div class="app-ic run"><svg viewBox="0 0 54 54"><rect width="54" height="54" rx="10" fill="#f4f4f4"/><path fill="#8fb6e6" d="M4 5h46v24H4z"/><path fill="#2d4a75" d="M4 29h46v9H4z"/><path fill="#bcc8cf" d="M4 37h46v13H4z"/><path fill="#5d7896" d="M6 38l8 3 6-2 4 5-8 2-9-3z"/><path fill="#1b1b1b" d="M28 27h22v11H28z"/><path fill="#d9dde0" stroke="#555" d="M27 38h24l3 17H24z"/></svg></div>
  <div class="app-ic run"><svg viewBox="0 0 54 54"><rect width="54" height="54" rx="12" fill="#0d62f2"/><text class="zoomt" x="27" y="31">zoom</text></svg></div>
  <div class="app-ic run"><svg><use href="#anydesk"/></svg></div>
  <div class="app-ic run big-sh"><svg viewBox="0 0 66 68"><use href="#shield"/><path fill="#a455d8" d="M33 17a9 9 0 0 1 5 16v11H28V33a9 9 0 0 1 5-16z"/></svg></div>
  <div class="sep s2"></div>
  <div class="thumb"><svg viewBox="0 0 64 37"><path fill="#f6f6f8" d="M0 0h64v37H0z"/><path fill="#dedee2" d="M0 0h64v4H0z"/></svg><svg class="mini"><use href="#safari"/></svg></div>
  <div class="thumb"><svg viewBox="0 0 64 43"><path fill="#1d2327" d="M0 0h64v43H0z"/><path fill="#2d353a" d="M20 22h11v13H20zM33 22h11v13H33zM46 22h11v13H46z"/><path d="M26 7h24M26 10h30" stroke="#98a2a6" stroke-width="1.500"/><path d="M2 7h9M2 12h9M2 17h9M2 22h9M2 27h9" stroke="#6b7478"/><circle cx="22" cy="8" r="2.500" fill="#1f6b4b"/></svg><svg class="mini guard"><use href="#shield"/></svg></div>
  <div class="thumb"><svg viewBox="0 0 64 36"><path fill="#f6f3f8" d="M0 0h64v36H0z"/><path fill="#471d4c" d="M0 0h64v3H0zM0 0h20v36H0z"/><path fill="#d9a3ee" d="M6 5h13v4H6z"/><path d="M23 8h16M23 13h12M23 18h17M23 27h15M46 8h12" stroke="#9d8fa2" stroke-width="1.500"/></svg><svg class="mini"><use href="#slack"/></svg></div>
  <div class="thumb"><svg viewBox="0 0 64 36"><path fill="#eee9df" d="M0 0h64v36H0z"/><path fill="#6d513b" d="M17 5h34v8H17z"/><path fill="#26323d" d="M5 14h27v12H5z"/><path fill="#17406b" d="M46 13h17v14H46z"/><path fill="#5b5148" d="M33 14h12v11H33zM33 27h12v9H33z"/><path fill="#8aa0b5" d="M5 28h13v8H5zM20 28h12v8H20z"/></svg><svg class="mini"><use href="#edge"/></svg></div>
  <div class="thumb"><svg viewBox="0 0 64 48"><path fill="#f5f5f7" d="M0 0h64v48H0z"/><path fill="#e1e1e6" d="M0 0h64v4H0zM0 4h8v44H0z"/><path d="M15 9h22M15 13h32M15 17h30M15 21h20M15 26h28M15 30h25M15 35h20M15 40h26" stroke="#8e8e92" stroke-width="1.300"/></svg><svg class="mini" viewBox="0 0 54 54"><rect width="54" height="54" rx="10" fill="#9ec0ea"/><path fill="#2d4a75" d="M3 28h48v12H3z"/><path fill="#1b1b1b" d="M28 30h22v10H28z"/><path fill="#ccd0d3" d="M26 40h26v14H26z"/></svg></div>
  <div class="thumb tall"><svg viewBox="0 0 47 64"><path fill="#fbfbfb" d="M0 0h47v64H0z"/><path fill="#dcdce0" d="M0 0h47v8H0z"/><path fill="#1d6fb0" d="M2 10h21v11H2z"/></svg><svg class="mini"><use href="#anydesk"/></svg></div>
  <div class="thumb term"><svg viewBox="0 0 68 44"><rect width="68" height="44" rx="2" fill="#111"/><path fill="#f7f7f7" d="M4 4h60v37H4z"/><path d="M6 7h28M6 11h36M6 15h16M6 20h10M24 15h14M6 26h8M6 31h26M6 35h32M6 38h30" stroke="#6c6c6c" stroke-width="1.300"/></svg></div>
  <div class="thumb"><svg viewBox="0 0 64 36"><path fill="#f4f1f8" d="M0 0h64v36H0z"/></svg><svg class="mini"><use href="#chrome"/></svg></div>
  <div class="thumb"><svg viewBox="0 0 64 36"><path fill="#f4f1f8" d="M0 0h64v36H0z"/></svg><svg class="mini"><use href="#chrome"/></svg></div>
  <div class="trash"><svg viewBox="0 0 50 64"><path fill="#d9d9dd" d="M1 10h48l-6 48q-18 10-36 0z"/><path fill="#c6c6cc" d="M12 16h2l4 42h-3zM36 16h2l-3 42h-3z"/><ellipse cx="25" cy="10" rx="24" ry="6" fill="#8f8f94"/><path fill="#f5f5f5" d="m6 11 8-8 8 4 6-7 8 5 8 6-10 4H14z"/><path fill="#4a4a52" d="m12 6 6-2 2 6-6 2zM30 4l7 1-3 6zM22 10l6-3 2 5z"/><path fill="#4fa3a0" d="m8 9 4 1-2 3z"/></svg></div>
</div>
<script src="chart.js"></script>
</body>
</html>
```
FILE: styles.css
```css
* { box-sizing: border-box; }
body { margin: 0; width: 2880px; height: 1800px; overflow: hidden; position: relative; background: #050318; font-family: Inter, "Liberation Sans", sans-serif; color: #2b2b2b; }
.defs { position: absolute; }
h1, p { margin: 0; font-weight: 400; }
i, em { font-style: normal; }
svg { flex: none; display: block; }
.wallpaper { position: absolute; inset: 0; width: 2880px; height: 1800px; }

/* macOS menu bar */
.menubar { position: relative; height: 48px; display: flex; background: linear-gradient(90deg, #7715bc, #6716c8 50%, #5a13bc 80%, #5011ac); color: #f3ebfc; font-size: 25.5px; font-weight: 500; line-height: 46px; text-shadow: 0 3px 6px rgba(30, 0, 80, .5); }
.menus { display: grid; grid-template-columns: 67px 118px 84px 88px 100px 128px 176px 141px 136px 1fr; width: 1510px; padding-left: 40px; letter-spacing: -.012em; }
.menus svg { margin-top: 6px; }
.menus b { font-weight: 700; letter-spacing: .01em; }
.status { margin: 0 0 0 40px; }
.zm, .snag { font: 700 19px Inter, sans-serif; text-anchor: middle; fill: #fff; stroke: none; }
.snag { font-size: 25px; fill: #6d1fd0; }
.clock { letter-spacing: .24px; white-space: nowrap; }

.desk-label { position: absolute; font-size: 23px; font-weight: 600; line-height: 28px; color: #f0edf6; text-shadow: 0 2px 4px #000; }

/* Safari window */
.window { position: absolute; left: 0; top: 50px; width: 2810px; height: 1626px; border-radius: 20px; overflow: hidden; background: #fff; box-shadow: 0 16px 40px rgba(0, 0, 0, .35); display: flex; flex-direction: column; }
.toolbar { height: 104px; background: #f4f1f8; display: flex; align-items: center; padding-left: 40px; }
.lights { display: flex; gap: 16px; }
.lights i { width: 24px; height: 24px; border-radius: 50%; }
.red { background: #fe5f57; } .amber { background: #febc2e; } .green { background: #28c840; }
.ic-side { margin-left: 52px; }
.group { width: 170px; margin: -2px 0 0 23px; font-size: 25.5px; font-weight: 600; letter-spacing: -.16px; color: #636168; }
.ic-back { margin-left: 52px; }
.ic-fwd { margin-left: 55px; }
.ic-shield { margin-left: 191px; }
.url { margin-left: 26px; width: 1138px; height: 57px; border: 2px solid #d6d3da; border-radius: 13px; display: flex; align-items: center; padding-left: 269px; font-size: 25.5px; color: #48464c; }
.url span { margin-left: 12px; width: 802px; padding-top: 2px; }
.ic-dl { margin-left: 538px; }
.ic-share { margin-left: 41px; margin-top: -4px; }
.ic-plus { margin-left: 43px; margin-top: -2px; }
.ic-tabs { margin-left: 43px; }
.tabbar { height: 57px; display: grid; grid-template-columns: 936px 938px 936px; border-bottom: 2px solid #d4d1d9; background: #f4f1f8; font-size: 21.5px; color: #6c6a71; }
.btab { display: flex; align-items: center; white-space: nowrap; }
.first { background: #e6e4ea; border-top: 2px solid #cbc8d0; border-right: 2px solid #d4d1d9; padding-left: 14px; }
.first .fav { margin-left: 16px; }
.first span { margin-left: 10px; letter-spacing: .08px; }
.second { border-top: 2px solid #cbc8d0; border-right: 2px solid #d4d1d9; padding-left: 100px; }
.second span { margin-left: 10px; letter-spacing: .37px; }
.active { padding-left: 348px; color: #3b393f; font-weight: 500; padding-top: 2px; }
.active span { margin-left: 13px; letter-spacing: 0; }
.fav { width: 32px; height: 32px; border-radius: 7px; background: #8e929c; color: #fff; font-size: 22px; font-weight: 600; line-height: 32px; text-align: center; }

/* Sidebar */
.app { position: relative; flex: 1; display: flex; min-height: 0; }
.app::after { content: ""; position: absolute; left: 0; right: 0; bottom: 0; height: 70px; background: linear-gradient(rgba(0, 0, 0, 0), rgba(0, 0, 0, .07)); pointer-events: none; }
.sidebar { width: 210px; border-right: 2px solid #dcdcdc; font: 24px "Liberation Serif", serif; letter-spacing: .3px; }
.nav { height: 150px; padding-top: 24px; display: flex; flex-direction: column; align-items: center; gap: 5px; line-height: 28px; color: #2b2b2b; }
.nav span { margin-right: 1px; }
.nav svg { width: 64px; height: 64px; overflow: visible; }
.navscroll svg, .help svg, .help + .nav svg { fill: none; stroke: currentColor; stroke-width: 4; }
.nav .f { fill: currentColor; stroke: none; }
.nav.home { height: 167px; padding-top: 21px; gap: 21px; border-bottom: 2px solid #dcdcdc; }
.nav.home svg { width: 46px; height: 50px; margin-right: 6px; }
.nav.amazonq { height: 184px; padding-top: 36px; gap: 9px; color: #959595; border-bottom: 2px solid #dcdcdc; }
.navscroll { height: 786px; overflow: hidden; margin-bottom: 12px; }
.nav.current { background: #f0eefb; color: #4d3fcd; }

/* Header and tabs */
.main { width: 2600px; display: flex; flex-direction: column; }
.crumbs { height: 121px; display: flex; align-items: center; padding: 0 0 2px 62px; border-bottom: 2px solid #dedede; font-size: 38px; font-weight: 500; }
.c1 { width: 220px; letter-spacing: -.5px; }
.c2 { width: 218px; margin-left: 23px; letter-spacing: -.28px; }
.crumbs b { width: 1363px; margin-left: 24px; font-weight: 700; letter-spacing: -.12px; }
.btn { height: 84px; width: 320px; border: 2px solid #a59de8; border-radius: 8px; background: #fff; color: #4d3fcd; font: 600 27.5px Inter, sans-serif; letter-spacing: .8px; display: flex; align-items: center; justify-content: center; padding: 0; white-space: nowrap; }
.btn.solid { background: #4d3fcd; border: 0; color: #fff; box-shadow: 0 4px 6px rgba(0, 0, 0, .3); }
.create { width: 394px; height: 72px; justify-content: flex-start; padding-left: 31px; gap: 23px; letter-spacing: .67px; }
.hist { margin-left: 24px; }
.dots { margin-left: 67px; }
.steps { height: 98px; display: flex; margin-left: -2px; padding: 0; border-bottom: 2px solid #dedede; font-size: 27.5px; font-weight: 600; color: #5f5f5f; letter-spacing: .3px; }
.steps span { width: 320px; height: 96px; line-height: 96px; text-align: center; }
.steps .on { color: #4d3fcd; border-bottom: 4px solid #4d3fcd; }

/* Model status */
.statuspane { height: 456px; display: flex; padding-left: 126px; }
.left { width: 1322px; padding-top: 70px; }
.title { display: flex; height: 48px; align-items: center; }
h1 { font-size: 38px; font-weight: 500; width: 248px; letter-spacing: -.3px; white-space: nowrap; }
.chip { width: 208px; height: 48px; border: 2px solid #bdbdbd; border-radius: 24px; display: flex; align-items: center; font-size: 25.5px; padding-left: 7px; gap: 7px; }
.metrics { display: grid; grid-template-columns: 238px 1fr; grid-template-rows: 40px 80px; row-gap: 17px; margin-top: 42px; }
.mh { display: flex; align-items: center; font-size: 25.5px; }
.mh b { width: 88px; font-weight: 700; letter-spacing: .8px; }
.m2 b { width: 70px; letter-spacing: .3px; }
.info { width: 40px; height: 40px; color: #666; }
.opt { margin-left: 8px; height: 40px; line-height: 41px; padding: 0 12px; border-radius: 20px; background: #ebebeb; font-size: 24px; }
.big { font-size: 69px; font-weight: 300; line-height: 81px; letter-spacing: -2.6px; }
.b2 { letter-spacing: -1.5px; margin-left: -2px; }
.desc { margin-top: 18px; display: flex; align-items: center; font-size: 31px; line-height: 48px; letter-spacing: -.215px; }
.desc p { width: 1282px; padding-right: 100px; }
.desc svg { margin-top: -2px; }
.actions { margin: 242px 0 0; display: flex; gap: 32px; height: 84px; }

/* Overview tabs */
.subtabs { height: 102px; display: flex; align-items: center; border-bottom: 2px solid #dedede; }
.sub { height: 102px; width: 960px; border-bottom: 4px solid #dedede; margin-bottom: -2px; }
.sub span { height: 98px; line-height: 100px; }
.sub .on { border-bottom: 4px solid #4d3fcd; }
.sub .adv { letter-spacing: .37px; }
.lb { margin: 3px 0 0 1110px; }
.lbt { margin: 2px 0 0 18px; width: 363px; color: #bdbdbd; font-size: 27.5px; font-weight: 600; letter-spacing: .72px; }
.up { margin-top: 3px; }

/* Column impact */
.split { height: 560px; display: flex; overflow: hidden; }
.impact { width: 860px; border-right: 2px solid #dedede; }
.ih { height: 35px; margin: 45px 0 28px; padding-left: 46px; display: flex; align-items: center; font-size: 31px; }
.ih b { width: 250px; font-weight: 650; letter-spacing: .35px; white-space: nowrap; }
.arr { margin-left: 22px; }
.search { margin: 0 32px 32px 46px; height: 80px; border: 2px solid #bdbdbd; border-radius: 8px; display: flex; align-items: center; padding-left: 27px; font-size: 31px; letter-spacing: -.33px; color: #a3a3a3; }
.search span { margin-left: 17px; padding-top: 1px; }
.list { border-top: 2px solid #dedede; padding-top: 16px; }
.row { height: 112px; padding: 16px 0 0 46px; display: flex; }
.row.sel { background: #f0edfe; }
.row i { width: 72px; height: 72px; border: 2px solid #bdbdbd; border-radius: 50%; text-align: center; line-height: 70px; font-size: 30px; font-weight: 650; }
.sel i { border-color: #4d3fcd; }
.nm { width: 531px; margin-left: 40px; padding-top: 15px; font-size: 30px; line-height: 36px; color: #000; }
.gre { letter-spacing: .75px; }
.bar { margin-top: 13px; height: 8px; background: #2b95e3; border-radius: 0 4px 4px 0; }
.row em { width: 129px; padding-top: 53px; line-height: 30px; text-align: right; font-size: 27.5px; letter-spacing: -.25px; color: #666; }

/* Scatter chart */
.chart { background: #fafafa; }
.ct { font-size: 31px; font-weight: 650; fill: #2b2b2b; }
.yl { font-size: 28px; fill: #000; }
.tick { font-size: 24px; text-anchor: end; fill: #777; }
.grid { fill: none; stroke: #cbcbcb; stroke-width: 2; stroke-dasharray: 6 6; }
.axis { stroke: #555; }
.pts { fill: rgba(43, 149, 227, .5); stroke: #2b95e3; stroke-width: 3.6; }

/* Footer */
.foot { height: 128px; border-top: 2px solid #dedede; padding: 2px 0 0 62px; display: grid; grid-template-columns: 399px 313px 315px 321px 391px 569px 166px; align-items: center; font-size: 27.5px; color: #666; letter-spacing: -.13px; }
.foot div { display: flex; align-items: center; gap: 8px; }
.foot .tgt { letter-spacing: 0; }
.foot div:nth-child(6) { gap: 13px; }
.foot .btn { width: 166px; height: 72px; }
.chat { position: absolute; right: 0; top: 1267px; width: 78px; height: 68px; border-radius: 34px 0 0 34px; background: #3f91d2; box-shadow: 0 6px 16px rgba(0, 0, 0, .4); display: flex; align-items: center; padding-left: 16px; }

/* Annotation */
.callout { position: absolute; left: 908px; top: 473px; width: 1740px; height: 130px; border-radius: 6px; background: #f93f64; color: #fff; padding: 14px 18px; filter: drop-shadow(0 26px 20px rgba(0, 0, 0, .09)); }
.callout svg { position: absolute; left: -52px; top: 127px; }
.callout p { font-size: 27.5px; font-weight: 600; line-height: 34px; letter-spacing: -.07px; white-space: nowrap; }

/* Dock */
.dock { position: absolute; left: 54px; top: 1700px; width: 2772px; height: 90px; border: 2px solid rgba(255, 255, 255, .25); border-radius: 26px; background: linear-gradient(90deg, #5b5577, #5e5688 30%, #6859b0 50%, #7358b4 61%, #9b56cc 64%, #a556da 68%, #9a55d5 77%, #8257c6 86%, #7256b0 93%, #6d58a8); display: flex; padding: 12px 0 0 13px; }
.app-ic { position: relative; width: 54px; height: 55px; margin-right: 18.85px; }
.app-ic > svg { width: 54px; height: 55px; overflow: visible; }
.run::after { content: ""; position: absolute; left: 23px; top: 64px; width: 8px; height: 8px; border-radius: 50%; background: #0b0420; }
.badge { position: absolute; left: 37px; top: -4px; height: 25px; width: 25px; border-radius: 13px; background: #f5413f; color: #fff; font-size: 16px; line-height: 25px; text-align: center; }
.badge.wide { left: 13px; width: 49px; font-size: 14.5px; }
.sep { width: 2px; height: 66px; background: #48208c; }
.s1 { margin: -2px 22px 0 9px; }
.s2 { margin: -2px 18px 0 2px; }
.big-sh { width: 66px; margin: 0 19px 0 -7px; }
.big-sh > svg { width: 66px; height: 68px; margin-top: -6px; }
.big-sh::after { left: 29px; }
.thumb { position: relative; width: 64px; height: 60px; margin-right: 8.8px; display: flex; align-items: center; }
.thumb > svg:first-child { width: 64px; }
.thumb .mini { position: absolute; right: 2px; bottom: -1px; width: 20px; height: 20px; }
.thumb .guard { right: 0; width: 24px; height: 25px; bottom: -3px; }
.tall { width: 47px; margin-left: 9px; margin-right: 15px; }
.tall > svg:first-child { width: 47px; height: 64px; }
.tall .mini { right: -7px; }
.term { width: 68px; margin-right: 6px; }
.term > svg:first-child { width: 68px; }
.trash { width: 50px; margin: -4px 0 0 6px; }
.trash svg { width: 50px; height: 64px; }
.jan, .five, .tv, .w, .zoomt { text-anchor: middle; font-family: Inter, sans-serif; font-weight: 600; font-size: 13px; fill: #fff; }
.five { font-size: 32px; font-weight: 300; fill: #222; }
.tv { font-size: 20px; font-weight: 500; }
.w { font-size: 17px; font-weight: 700; }
.zoomt { font-size: 15px; }
```
FILE: chart.js
```js
// Sampled CGPA impact values, in chart coordinates.
const points = [
  [1310,1488],[1358,1425],[1347,1461],[1347,1461],[1379,1479],[1421.5,1503.5],[1427,1505],[1443.5,1424.5],[1437.5,1454],[1443.5,1456.5],
  [1539,1356.5],[1561,1431],[1555,1443],[1561,1460],[1545,1518],[1550,1551.5],[1667,1371.5],[1667,1385],[1667,1388.5],[1667,1404.5],
  [1678,1429.5],[1715.5,1396.5],[1731.5,1370],[1747.5,1379.5],[1747.5,1385.5],[1753,1358],[1753,1358],[1780,1323.5],[1780,1327],[1780,1331],
  [1785,1338],[1806,1344],[1811,1320],[1822,1326],[1796,1356.5],[1798,1357.5],[1801,1358.5],[1838,1429.5],[1870.5,1326],[1875.5,1301.5],
  [1892,1297],[1902.5,1313],[1913,1323.5],[1913,1331],[1945,1335],[1955.5,1317.5],[1961,1323.5],[1966.5,1329],[1988,1320],[1993.5,1323],
  [1999,1335],[2030.5,1295],[2035.5,1308],[2073,1305],[2078.5,1300.5],[2089,1306.5],[2095,1280],[2132,1274],[2137,1292],[2137,1298],
  [2148,1278.5],[2148,1314.5],[2153.5,1287.5],[2159,1292.5],[2175,1295.5],[2212,1270.5],[2233.5,1254],[2265,1262.5],[2265,1275],[2276,1274],
  [2276,1278.5],[2287,1243],[2287,1246.5],[2287,1249.5],[2308,1224],[2324,1211.5],[2318.5,1230],[2318.5,1233.5],[2340,1233.5],[2345.5,1229],
  [2361.5,1234],[2382.5,1220],[2388.5,1216.5],[2399,1216.5],[2404,1206.5],[2404,1209.5],[2415,1230.5],[2436.5,1214],[2479,1199],[2506,1214],
  [2521.5,1196],[2533,1190],[2533,1201.5],[2564.5,1200],[2585.5,1214],[2692.5,1171.5],[2692.5,1188],[2703,1185],[2730,1176]
];
const layer = document.getElementById('pts');
for (const [x, y] of points) {
  const dot = document.createElementNS('http://www.w3.org/2000/svg', 'circle');
  dot.setAttribute('cx', x);
  dot.setAttribute('cy', y);
  dot.setAttribute('r', 9);
  layer.appendChild(dot);
}
```
